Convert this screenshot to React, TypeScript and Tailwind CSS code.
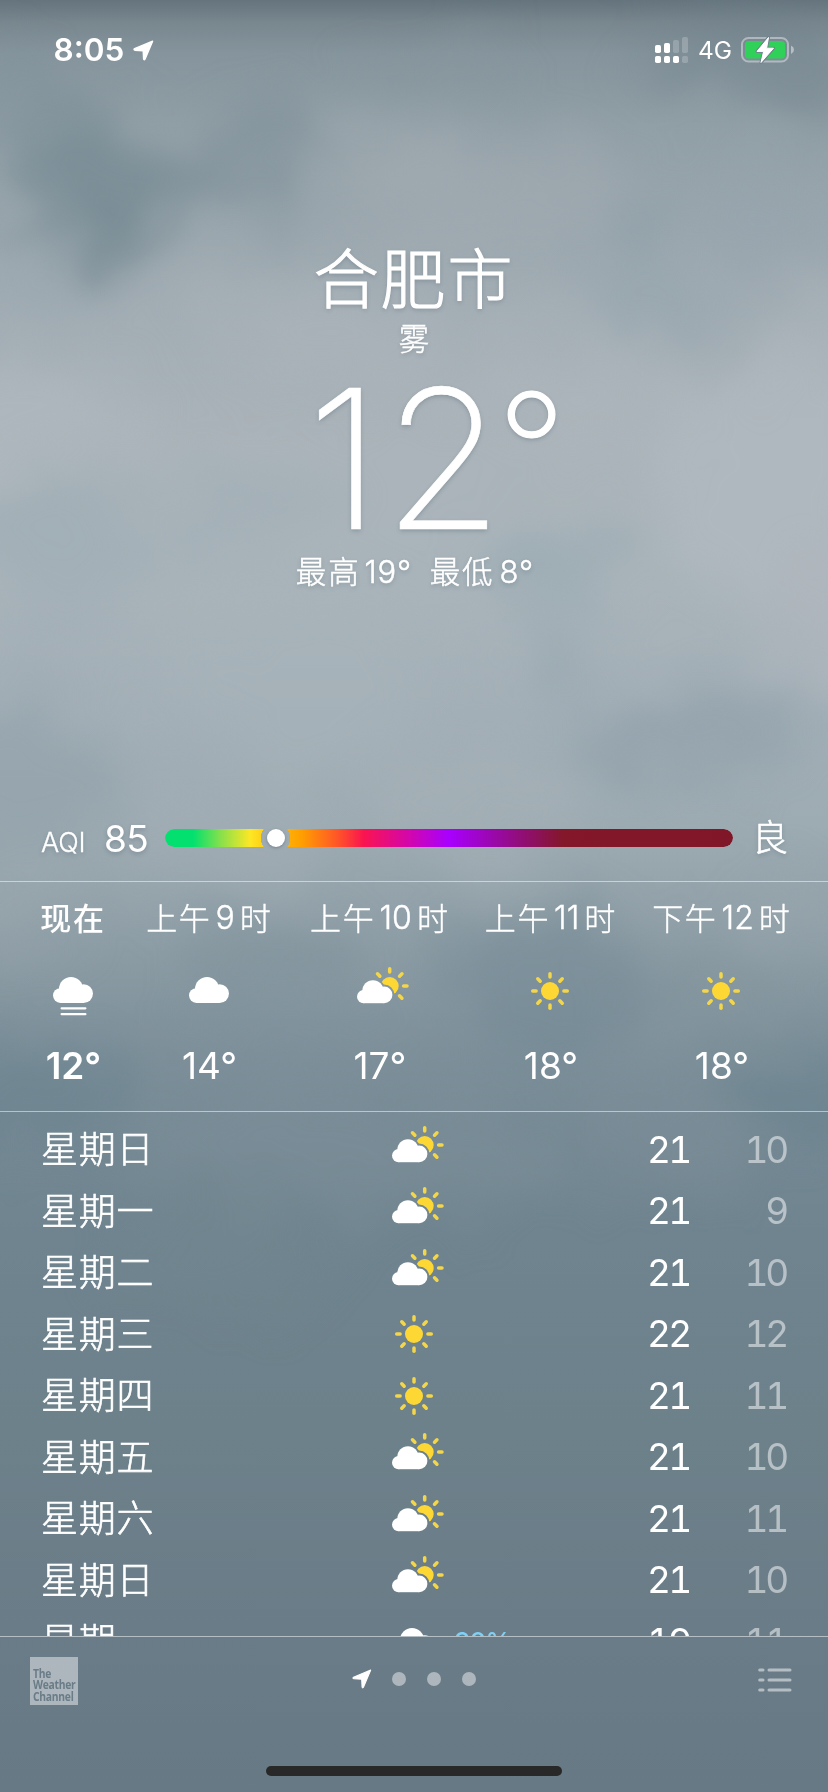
import { useId } from "react";

type Weather = "fog" | "cloud" | "partly" | "sun" | "rain";

interface Hour {
  prefix: string;
  num?: string;
  suffix?: string;
  icon: Weather;
  temp: string;
  cell: string;
  now?: boolean;
}

const hours: Hour[] = [
  { prefix: "现在", icon: "fog", temp: "12°", cell: "w-[145px]", now: true },
  { prefix: "上午", num: "9", suffix: "时", icon: "cloud", temp: "14°", cell: "w-[127px]" },
  { prefix: "上午", num: "10", suffix: "时", icon: "partly", temp: "17°", cell: "w-[214px]" },
  { prefix: "上午", num: "11", suffix: "时", icon: "sun", temp: "18°", cell: "w-[128px]" },
  { prefix: "下午", num: "12", suffix: "时", icon: "sun", temp: "18°", cell: "w-[214px]" },
];

const days: { name: string; icon: Weather; high: number; low: number; chance?: string }[] = [
  { name: "星期日", icon: "partly", high: 21, low: 10 },
  { name: "星期一", icon: "partly", high: 21, low: 9 },
  { name: "星期二", icon: "partly", high: 21, low: 10 },
  { name: "星期三", icon: "sun", high: 22, low: 12 },
  { name: "星期四", icon: "sun", high: 21, low: 11 },
  { name: "星期五", icon: "partly", high: 21, low: 10 },
  { name: "星期六", icon: "partly", high: 21, low: 11 },
  { name: "星期日", icon: "partly", high: 21, low: 10 },
  { name: "星期一", icon: "rain", high: 19, low: 11, chance: "30%" },
];

function CloudShape() {
  return (
    <>
      <circle cx="7.4" cy="18.6" r="7.4" />
      <circle cx="18" cy="12" r="12" />
      <circle cx="30.6" cy="16.6" r="9.4" />
      <rect x="7.4" y="14" width="23.2" height="12" />
    </>
  );
}

function Sun({ cx, cy, rays }: { cx: number; cy: number; rays: number[] }) {
  return (
    <g transform={`translate(${cx} ${cy})`}>
      <circle r="9" fill="#fdd835" />
      {rays.map((a) => (
        <path
          key={a}
          d="M0 -13.9V-17.3"
          transform={`rotate(${a})`}
          stroke="#f3d64a"
          strokeWidth="3.5"
          strokeLinecap="round"
        />
      ))}
    </g>
  );
}

function WeatherIcon({ kind }: { kind: Weather }) {
  const id = useId();
  return (
    <svg width="60" height="60" viewBox="-30 -30 60 60" className="block">
      {kind === "sun" && <Sun cx={0} cy={0} rays={[0, 45, 90, 135, 180, 225, 270, 315]} />}
      {kind === "partly" && (
        <>
          <mask id={id} maskUnits="userSpaceOnUse" x="-30" y="-30" width="60" height="60">
            <rect x="-30" y="-30" width="60" height="60" fill="#fff" />
            <g transform="translate(-22 -10.8) scale(.885)" fill="#000" stroke="#000" strokeWidth="4.5">
              <CloudShape />
            </g>
          </mask>
          <g mask={`url(#${id})`}>
            <Sun cx={10.7} cy={-5} rays={[0, 45, 90, 135, 315]} />
          </g>
          <g transform="translate(-22 -10.8) scale(.885)" fill="#fff">
            <CloudShape />
          </g>
        </>
      )}
      {(kind === "cloud" || kind === "fog" || kind === "rain") && (
        <g transform="translate(-20 -14)" fill="#fff">
          <CloudShape />
        </g>
      )}
      {kind === "fog" && (
        <path d="M-11.4 17.3H12.4M-11.4 23.2H12.4" stroke="#fff" strokeWidth="2.2" strokeLinecap="round" />
      )}
      {kind === "rain" && (
        <path d="M-8 17L-11 22M1 17L-2 22M10 17L7 22" stroke="#7fd0f5" strokeWidth="2.5" strokeLinecap="round" />
      )}
    </svg>
  );
}

function Sky() {
  const blobs: [number, number, number, number, string, number][] = [
    [100, 185, 85, 65, "#70858f", 0.65],
    [110, 240, 50, 30, "#6d828c", 0.45],
    [240, 160, 90, 40, "#7b8d97", 0.5],
    [15, 100, 60, 60, "#80929b", 0.4],
    [760, 55, 120, 50, "#6e808a", 0.4],
    [440, 70, 80, 30, "#86959e", 0.4],
    [500, 190, 120, 60, "#a4adb3", 0.4],
    [390, 160, 90, 50, "#a1abb1", 0.5],
    [630, 225, 50, 35, "#8b9da8", 0.5],
    [650, 300, 55, 30, "#8c9fa9", 0.4],
    [770, 230, 60, 60, "#95a4ad", 0.5],
    [30, 290, 60, 30, "#95a5ae", 0.4],
    [20, 420, 90, 60, "#b1b9bf", 0.6],
    [330, 330, 120, 60, "#adb5bb", 0.5],
    [560, 390, 110, 50, "#b0b8be", 0.5],
    [770, 480, 120, 120, "#b3bac1", 0.6],
    [800, 350, 60, 40, "#afb7bd", 0.5],
    [60, 540, 90, 50, "#9cabb3", 0.5],
    [240, 510, 80, 40, "#9fadb5", 0.5],
    [40, 620, 80, 40, "#a0adb6", 0.4],
    [550, 570, 70, 50, "#9aaab3", 0.6],
    [560, 670, 40, 30, "#8fa1ab", 0.5],
    [690, 740, 105, 40, "#879aa4", 0.45],
    [820, 620, 60, 70, "#b0b7be", 0.7],
    [300, 680, 140, 90, "#a8b3ba", 0.5],
    [20, 770, 110, 80, "#90a1aa", 0.55],
    [200, 830, 110, 50, "#a3aeb5", 0.5],
    [470, 800, 120, 50, "#a7b1b8", 0.5],
    [270, 970, 90, 50, "#7f919c", 0.5],
    [560, 990, 110, 70, "#728894", 0.5],
    [780, 920, 70, 40, "#97a6ae", 0.5],
    [700, 1010, 80, 60, "#84959e", 0.4],
    [20, 900, 60, 50, "#9aa8ae", 0.4],
    [20, 1100, 110, 50, "#68818e", 0.5],
    [810, 1090, 90, 60, "#68818e", 0.5],
    [350, 1150, 220, 60, "#7f919a", 0.4],
    [680, 1140, 80, 40, "#82929b", 0.4],
    [220, 1250, 110, 50, "#74878f", 0.35],
  ];
  return (
    <svg className="absolute inset-0" width="828" height="1792" viewBox="0 0 828 1792" aria-hidden="true">
      <defs>
        <linearGradient id="sky-base" x1="0" y1="0" x2="0" y2="1">
          <stop offset="0" stopColor="#65747d" />
          <stop offset=".012" stopColor="#78868e" />
          <stop offset=".03" stopColor="#86959d" />
          <stop offset=".07" stopColor="#919fa6" />
          <stop offset=".16" stopColor="#a1acb3" />
          <stop offset=".25" stopColor="#abb4ba" />
          <stop offset=".33" stopColor="#a9b4ba" />
          <stop offset=".4" stopColor="#a3afb7" />
          <stop offset=".46" stopColor="#9dabb2" />
          <stop offset=".51" stopColor="#92a1a9" />
          <stop offset=".57" stopColor="#81939d" />
          <stop offset=".63" stopColor="#758994" />
          <stop offset=".69" stopColor="#6f848f" />
          <stop offset=".8" stopColor="#6d818b" />
          <stop offset=".91" stopColor="#6a7c87" />
          <stop offset="1" stopColor="#677984" />
        </linearGradient>
        <filter
          id="sky-soft"
          filterUnits="userSpaceOnUse"
          x="-200"
          y="-200"
          width="1228"
          height="1700"
          colorInterpolationFilters="sRGB"
        >
          <feGaussianBlur in="SourceGraphic" stdDeviation="22" result="soft" />
          <feTurbulence type="fractalNoise" baseFrequency="0.009" numOctaves="3" seed="8" result="noise" />
          <feDisplacementMap in="soft" in2="noise" scale="110" xChannelSelector="R" yChannelSelector="G" />
          <feGaussianBlur stdDeviation="8" />
        </filter>
      </defs>
      <rect width="828" height="1792" fill="url(#sky-base)" />
      <g filter="url(#sky-soft)">
        {blobs.map(([cx, cy, rx, ry, fill, o], i) => (
          <ellipse key={i} cx={cx} cy={cy} rx={rx} ry={ry} fill={fill} opacity={o} />
        ))}
      </g>
    </svg>
  );
}

function StatusBar() {
  return (
    <header className="flex h-[100px] items-center pl-[53.5px] pr-[33px]">
      <span className="w-[79px] text-[31.5px] leading-none font-semibold whitespace-nowrap">8:05</span>
      <svg width="21" height="21" viewBox="0 0 21 21">
        <path d="M19.6 1.2L12 19.2Q11.2 20.4 10.6 19L10.2 10.8L1.8 10.2Q.3 9.6 1.6 8.7Z" fill="#fff" stroke="#fff" strokeWidth="1.4" strokeLinejoin="round" />
      </svg>
      <svg className="ml-auto" width="34" height="26" viewBox="0 0 34 26" fill="#fff">
        <rect x="0" y="8" width="6" height="8" rx="1.8" />
        <rect x="9" y="6" width="6" height="10" rx="1.8" />
        <g opacity=".2">
          <rect x="18" y="3" width="6" height="13" rx="1.8" />
          <rect x="27" y="0" width="6" height="16" rx="1.8" />
          <rect x="27" y="19" width="6" height="7" rx="1.8" />
        </g>
        <rect x="0" y="19" width="6" height="7" rx="1.8" />
        <rect x="9" y="19" width="6" height="7" rx="1.8" />
        <rect x="18" y="19" width="6" height="7" rx="1.8" />
      </svg>
      <span className="ml-[9px] w-[43px] pt-[1px] text-[24.5px] leading-none font-normal tracking-[-0.2px]">4G</span>
      <svg width="54" height="28" viewBox="0 0 54 28">
        <rect x="1" y="2" width="46" height="23.5" rx="6.5" fill="none" stroke="#fff" strokeOpacity=".4" strokeWidth="2" />
        <rect x="4" y="5" width="40" height="17.5" rx="3.5" fill="#30d158" />
        <path d="M50 9.5Q53 11 53 13.8Q53 16.6 50 18Z" fill="#fff" fillOpacity=".45" />
        <path d="M27.5 1.5L16 15.4H22.6L20 26.5L32.5 12.2H25.6Z" fill="#fff" stroke="#72848d" strokeWidth="3" strokeLinejoin="round" />
        <path d="M27.5 1.5L16 15.4H22.6L20 26.5L32.5 12.2H25.6Z" fill="#fff" stroke="#fff" strokeWidth="1" strokeLinejoin="round" />
      </svg>
    </header>
  );
}

function Summary() {
  return (
    <section className="flex h-[700px] flex-col items-center pt-[140px] [text-shadow:0_2px_4px_rgba(60,80,95,0.3)]">
      <h1 className="h-[80px] text-[65px] leading-[80px] font-light tracking-[1.8px] [-webkit-text-stroke:1.1px_#fff]">合肥市</h1>
      <p className="h-[40px] text-[30.5px] leading-[38px] font-light [-webkit-text-stroke:0.4px_#fff]">雾</p>
      <div className="mt-[9px] flex h-[180px] self-stretch pl-[307px] font-extralight whitespace-nowrap">
        <span className="w-[190px] text-[194px] leading-[180px] tracking-[2.5px] [-webkit-text-stroke:0.6px_#fff]">12</span>
        <span className="text-[152px] leading-[159px] [-webkit-text-stroke:1.2px_#fff]">°</span>
      </div>
      <p className="mt-[1px] flex h-[43px] items-center pl-[2px] text-[30.5px] leading-[43px] font-light tracking-[1.8px] [-webkit-text-stroke:0.5px_#fff]">
        <span>最高</span>
        <span className="ml-[4px] text-[31px] tracking-[0.8px]">19°</span>
        <span className="ml-[18px]">最低</span>
        <span className="ml-[5px] text-[31px] tracking-[1px]">8°</span>
      </p>
    </section>
  );
}

function AirQuality() {
  return (
    <section className="mb-[5px] flex h-[76px] items-center pr-[40px] pl-[41px] [text-shadow:0_2px_4px_rgba(60,80,95,0.3)]">
      <span className="w-[63px] pt-[8px] text-[27px] leading-none font-light tracking-[-0.2px] [-webkit-text-stroke:0.3px_#fff]">AQI</span>
      <span className="w-[61px] text-[37px] leading-none font-normal tracking-[-0.6px]">85</span>
      <div className="relative h-[18px] w-[568px]">
        <div className="h-full w-full rounded-full bg-[linear-gradient(90deg,#04e06f_0%,#04e06f_5%,#8ce04a_10%,#fde725_15%,#ffc80f_18%,#ff9f00_24%,#ff5a25_30%,#fa1450_35%,#d808a0_42%,#a800ff_50%,#9a08a8_58%,#84172a_70%,#801729_100%)] [mask-image:radial-gradient(circle_at_110.5px_9px,transparent_14.5px,#000_15px)]" />
        <span className="absolute top-0 left-[101.5px] size-[18px] rounded-full bg-white shadow-[0_1px_3px_rgba(40,60,75,0.35)]" />
      </div>
      <span className="ml-[19px] text-[36px] leading-[60px] font-light [-webkit-text-stroke:0.6px_#fff]">良</span>
    </section>
  );
}

function Hourly() {
  return (
    <section className="flex h-[231px] border-y border-white/50">
      {hours.map((h) => (
        <div key={h.prefix + (h.num ?? "")} className={`flex shrink-0 flex-col items-center ${h.cell}`}>
          <div
            className={`flex h-[72px] items-center text-[31px] leading-none tracking-[1.7px] whitespace-nowrap ${
              h.now ? "pl-[1px] font-medium" : "font-light [-webkit-text-stroke:0.4px_#fff]"
            }`}
          >
            <span>{h.prefix}</span>
            {h.num && <span className="mr-[3px] ml-[4px] text-[32px] tracking-[0px]">{h.num}</span>}
            {h.suffix && <span className="ml-[2px] tracking-[0px]">{h.suffix}</span>}
          </div>
          <div className="mt-[7px] h-[60px]">
            <WeatherIcon kind={h.icon} />
          </div>
          <div className={`mt-[21px] pl-[2px] text-[37px] leading-[48px] ${h.now ? "font-semibold" : "font-normal"}`}>
            {h.temp}
          </div>
        </div>
      ))}
    </section>
  );
}

function Daily() {
  return (
    <section className="h-[524px] overflow-hidden pt-[7px]">
      {days.map((d, i) => (
        <div key={i} className="flex h-[61.5px] items-center pr-[39.5px] pl-[41px]">
          <span className="w-[343px] text-[37px] leading-none font-light tracking-[0.8px] [-webkit-text-stroke:0.6px_#fff]">
            {d.name}
          </span>
          <WeatherIcon kind={d.icon} />
          <span className="w-[203px] pl-[10px] text-[26px] leading-none font-medium tracking-[-0.8px] text-[#7fd0f5]">
            {d.chance}
          </span>
          <span className="pb-[1px] text-[37px] leading-none font-normal tabular-nums tracking-[-2.8px]">{d.high}</span>
          <span className="ml-auto pr-[2.5px] pb-[1px] text-[37px] leading-none font-normal tabular-nums tracking-[-3.2px] text-white/50">
            {d.low}
          </span>
        </div>
      ))}
    </section>
  );
}

function Footer() {
  return (
    <footer className="flex h-[156px] flex-col border-t border-white/50">
      <div className="flex h-[88px] items-center justify-between pr-[36px] pl-[30px]">
        <div className="size-[48px] bg-white/45 pt-[11px] pl-[3px]">
          <div className="flex w-[50px] origin-left scale-x-[0.86] flex-col font-['Open_Sans','Noto_Sans',sans-serif] text-[12px] leading-[11.3px] font-bold tracking-[-0.3px] text-[#6a7c87]">
            <span>The</span>
            <span>Weather</span>
            <span>Channel</span>
          </div>
        </div>
        <div className="mt-[-4px] mr-[9px] flex items-center gap-[21px]">
          <svg width="20" height="20" viewBox="0 0 21 21">
            <path d="M19.6 1.2L12 19.2Q11.2 20.4 10.6 19L10.2 10.8L1.8 10.2Q.3 9.6 1.6 8.7Z" fill="#fff" stroke="#fff" strokeWidth="1.2" strokeLinejoin="round" />
          </svg>
          <span className="ml-[-1px] size-[14px] rounded-full bg-white/45" />
          <span className="size-[14px] rounded-full bg-white/45" />
          <span className="size-[14px] rounded-full bg-white/45" />
        </div>
        <svg className="mt-[-2px]" width="34" height="26" viewBox="0 0 34 26" stroke="#fff" strokeOpacity=".5" strokeWidth="3" strokeLinecap="round">
          <path d="M1.7 3H5M11 3H32M1.7 13H5M11 13H32M1.7 23H5M11 23H32" />
        </svg>
      </div>
      <div className="mt-[41px] h-[10px] w-[296px] self-center rounded-full bg-[#282828]" />
    </footer>
  );
}

export default function App() {
  return (
    <div className="relative h-[1792px] w-[828px] overflow-hidden font-['Inter','Noto_Sans_CJK_SC',sans-serif] text-white">
      <Sky />
      <main className="relative flex flex-col">
        <StatusBar />
        <Summary />
        <AirQuality />
        <Hourly />
        <Daily />
        <Footer />
      </main>
    </div>
  );
}
